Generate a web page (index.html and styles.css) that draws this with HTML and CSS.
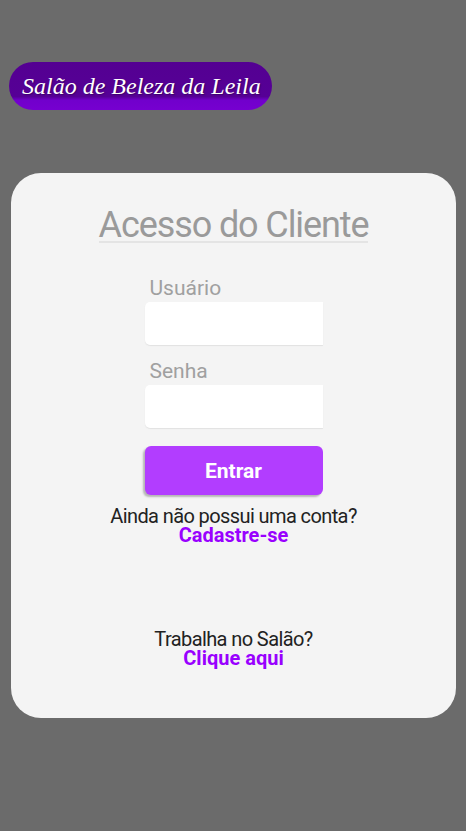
FILE: index.html
```html
<!DOCTYPE html>
<html lang="pt-BR">
<head>
<meta charset="utf-8">
<title>Salão de Beleza da Leila</title>
<link rel="stylesheet" href="styles.css">
</head>
<body>
<header class="top">
  <div class="brand">Salão de Beleza da Leila</div>
</header>
<main class="card">
  <h1 class="title">Acesso do Cliente</h1>
  <form class="form">
    <label class="label" for="u">Usuário</label>
    <input class="field" id="u" type="text">
    <label class="label label-2" for="s">Senha</label>
    <input class="field" id="s" type="password">
    <button class="btn" type="button">Entrar</button>
  </form>
  <p class="note"><span class="line">Ainda não possui uma conta?</span><a class="link" href="#">Cadastre-se</a></p>
  <p class="note note-2"><span class="line">Trabalha no Salão?</span><a class="link" href="#">Clique aqui</a></p>
</main>
</body>
</html>
```

FILE: styles.css
```css
* { box-sizing: border-box; }
html, body { margin: 0; padding: 0; }
body {
  background: #6b6b6b;
  font-family: Roboto, "Liberation Sans", sans-serif;
  width: 466px;
  height: 831px;
  overflow: hidden;
}
.top {
  padding: 62px 0 0 9px;
}
.brand {
  display: inline-block;
  height: 48px;
  width: 263px;
  border-radius: 24px;
  background: linear-gradient(180deg, #540092 0%, #560096 72%, #7100cc 80%, #7600d0 100%);
  color: #fff;
  font-family: "Liberation Serif", serif;
  font-style: italic;
  font-size: 24px;
  line-height: 48px;
  padding-left: 13px;
  white-space: nowrap;
  text-shadow: 1px 1px 1px rgba(40, 0, 70, 0.5);
}
.card {
  margin: 63px 0 0 11px;
  width: 445px;
  height: 545px;
  background: #f4f4f4;
  border-radius: 30px;
  display: flex;
  flex-direction: column;
  align-items: center;
  padding-top: 36px;
}
.title {
  margin: 0;
  font-weight: 400;
  font-size: 36px;
  line-height: 32px;
  letter-spacing: -1.1px;
  color: #9a9a9a;
  border-bottom: 2px solid #e4e4e4;
}
.form {
  width: 178px;
  margin-top: 35px;
  display: flex;
  flex-direction: column;
}
.label {
  font-size: 21px;
  line-height: 20px;
  padding-bottom: 4px;
  color: #a0a0a0;
  padding-left: 5px;
}
.label-2 { margin-top: 16px; }
.field {
  height: 43px;
  border: none;
  background: #fff;
  border-radius: 5px 0 0 5px;
  box-shadow: 0 1px 1px #e2e2e2;
  outline: none;
}
.btn {
  margin-top: 18px;
  height: 49px;
  border: none;
  border-radius: 6px;
  background: #b23dff;
  color: #fff;
  font-family: Roboto, "Liberation Sans", sans-serif;
  font-weight: 700;
  font-size: 21px;
  box-shadow: -2px 2px 2px #b5b5b5;
}
.note {
  margin: 12px 0 0;
  display: flex;
  flex-direction: column;
  align-items: center;
  font-size: 20px;
  line-height: 19px;
  color: #222;
}
.line { letter-spacing: -0.6px; }
.note-2 { margin-top: 85px; }
.link {
  color: #9900ff;
  font-weight: 700;
  text-decoration: none;
}
```
